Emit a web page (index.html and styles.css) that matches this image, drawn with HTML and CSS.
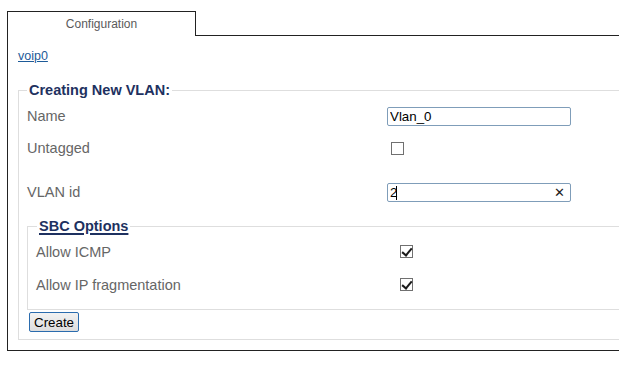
FILE: index.html
```html
<!DOCTYPE html>
<html lang="en">
<head>
    <title>Configuration</title>
    <link rel="stylesheet" href="styles.css">
</head>
<body>
  <div class="page">
    <div class="tabs">
        <div class="tab">Configuration</div>
        <div class="tab_fill"></div>
    </div>
    <div class="panel">
        <a class="iface" href="#">voip0</a>

        <form class="vlan_form">
          <fieldset class="box">
            <legend>Creating New VLAN:</legend>
            <div class="rows">
                <div class="row">
                    <label for="vname">Name</label>
                    <input type="text" id="vname" class="txt" value="Vlan_0">
                </div>
                <div class="row">
                    <label for="untag">Untagged</label>
                    <span class="chk" id="untag"></span>
                </div>
                <div class="row spaced">
                    <label for="vid">VLAN id</label>
                    <span class="clearable">
                        <input type="text" id="vid" class="txt" value="2">
                        <span class="caret"></span>
                        <span class="clear">&#x2715;</span>
                    </span>
                </div>
            </div>

            <fieldset class="box inner">
                <legend><u>SBC Options</u></legend>
                <div class="rows">
                    <div class="row tall">
                        <label>Allow ICMP</label>
                        <span class="chk on"></span>
                    </div>
                    <div class="row tall">
                        <label>Allow IP fragmentation</label>
                        <span class="chk on"></span>
                    </div>
                </div>
            </fieldset>

            <button type="button" class="btn">Create</button>
          </fieldset>
        </form>
    </div>
  </div>
</body>
</html>
```

FILE: styles.css
```css
*{
    box-sizing: border-box;
}
html, body{
    margin: 0;
    overflow: hidden;
    background: #fff;
}
body{
    font-family: "Liberation Sans", Arial, sans-serif;
}
.page{
    width: 720px;
    padding: 11px 0 0 7px;
}
.tabs{
    display: flex;
}
.tab{
    width: 189px;
    height: 25px;
    border: 1px solid #222;
    border-bottom: none;
    font-size: 12px;
    line-height: 24px;
    text-align: center;
    color: #5a5a5a;
}
.tab_fill{
    flex: 1;
    height: 25px;
    border-bottom: 1px solid #222;
}
.panel{
    border-left: 1px solid #222;
    border-bottom: 1px solid #222;
    padding: 13px 0 10px 10px;
}
.iface{
    display: block;
    width: max-content;
    font-size: 12.5px;
    line-height: 14px;
    color: #1d5a98;
    text-decoration: underline;
}
.vlan_form{
    margin: 19px 0 0 0;
}
.box{
    margin: 0;
    border: 1px solid #dedede;
    padding: 2px 8px 7px 8px;
    min-width: 0;
}
.box legend{
    padding: 0 2px;
    font-size: 14.5px;
    line-height: 16px;
    font-weight: bold;
    color: #1e3160;
}
.box legend u{
    text-decoration-thickness: 2px;
    text-underline-offset: 2px;
}
.inner{
    margin-top: 10px;
    padding: 1px 8px 8px 9px;
}
.row{
    display: grid;
    grid-template-columns: 360px 1fr;
    align-items: center;
    height: 32px;
}
.inner .row{
    grid-template-columns: 359px 1fr;
}
.row.spaced{
    margin-top: 12px;
}
.row.tall{
    height: 33px;
}
label{
    font-size: 14.5px;
    color: #666;
}
.inner label{
    margin-left: -1px;
}
.txt{
    width: 184px;
    height: 19px;
    margin: 0;
    padding: 0 2px;
    border: 1px solid #7f9db9;
    border-radius: 2px;
    font-family: "Liberation Sans", Arial, sans-serif;
    font-size: 13.33px;
    color: #000;
    outline: none;
}
.clearable{
    position: relative;
    display: block;
    width: 184px;
}
.caret{
    position: absolute;
    left: 9px;
    top: 3px;
    width: 1px;
    height: 14px;
    background: #000;
}
.clear{
    position: absolute;
    right: 6px;
    top: 1px;
    font-size: 13px;
    line-height: 17px;
    color: #222;
}
.chk{
    display: block;
    width: 13px;
    height: 13px;
    margin-left: 4px;
    border: 1px solid #707070;
    background: #fff;
    position: relative;
}
.chk.on::after{
    content: "";
    position: absolute;
    left: 3px;
    top: 0px;
    width: 4px;
    height: 8px;
    border-right: 2.5px solid #1a1a1a;
    border-bottom: 2.5px solid #1a1a1a;
    transform: rotate(40deg);
}
.btn{
    display: block;
    margin: 2px 0 0 2px;
    width: 50px;
    height: 20px;
    padding: 0 4px;
    border: 1px solid #2b6cae;
    border-radius: 2px;
    background: linear-gradient(#f2f2f2, #dddddd);
    font-family: "Liberation Sans", Arial, sans-serif;
    font-size: 13.33px;
    color: #000;
}
```
